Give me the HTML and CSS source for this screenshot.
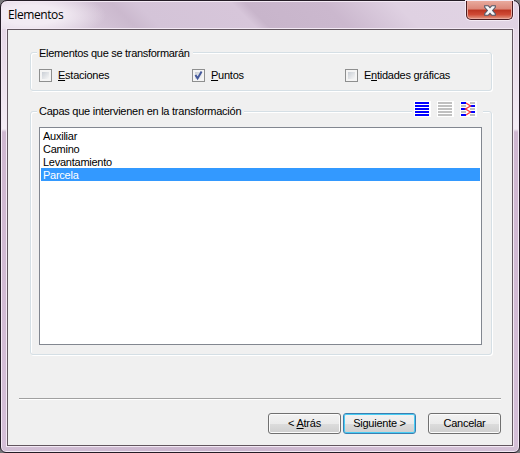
FILE: index.html
```html
<!DOCTYPE html>
<html lang="es">
<head>
<meta charset="utf-8">
<title>Elementos</title>
<link rel="stylesheet" href="styles.css">
</head>
<body>
<div class="window">
  <header class="titlebar">
    <h1 class="title">Elementos</h1>
    <button class="close" aria-label="Cerrar">
      <svg width="12" height="11" viewBox="0 0 12 11"><path d="M.7.7H4.2L6 2.7 7.8.7H11.3V2.4L8.6 5.5 11.3 8.6V10.3H7.8L6 8.3 4.2 10.3H.7V8.6L3.4 5.5.7 2.4Z" fill="#f6f6f8" stroke="#535666" stroke-width="1.1"/></svg>
    </button>
  </header>
  <main class="client">
    <section class="group options">
      <h2 class="legend">Elementos que se transformarán</h2>
      <div class="checks">
        <label class="check"><span class="box"></span><span><u>E</u>staciones</span></label>
        <label class="check"><span class="box"><svg width="11" height="11" viewBox="0 0 11 11"><path d="M2.4 5 4.6 8.4 8.6 1.6" fill="none" stroke="#45599b" stroke-width="2"/></svg></span><span><u>P</u>untos</span></label>
        <label class="check"><span class="box"></span><span>E<u>n</u>tidades gráficas</span></label>
      </div>
    </section>
    <section class="group layers">
      <h2 class="legend">Capas que intervienen en la transformación</h2>
      <div class="tools">
        <svg width="17" height="16" viewBox="0 0 17 16" shape-rendering="crispEdges"><path fill="#fff" d="M0 0h17v16H0z"/><path fill="#00f" d="M1 1h14v2H1zm0 3h14v2H1zm0 3h14v2H1zm0 3h14v2H1zm0 3h14v2H1z"/></svg>
        <svg width="17" height="16" viewBox="0 0 17 16" shape-rendering="crispEdges"><path fill="#fff" d="M0 0h17v16H0z"/><path fill="#c0c0c0" d="M1 1h14v2H1zm0 3h14v2H1zm0 3h14v2H1zm0 3h14v2H1zm0 3h14v2H1z"/></svg>
        <svg width="17" height="16" viewBox="0 0 17 16" shape-rendering="crispEdges"><path fill="#fff" d="M0 0h17v16H0z"/><path fill="#00f" d="M1 1h5v2H1zM10 4h5v2h-5zM1 7h5v2H1zM10 10h5v2h-5zM1 13h5v2H1z"/><path fill="#c0c0c0" d="M10 1h5v2h-5zM1 4h5v2H1zM10 7h5v2h-5zM1 10h5v2H1zM10 13h5v2h-5z"/><path shape-rendering="auto" fill="none" stroke="#ff3c3c" stroke-width="1.3" d="M6 2 10.5 5 5.5 8 10.5 11 6 14"/></svg>
      </div>
      <ul class="list">
        <li>Auxiliar</li>
        <li>Camino</li>
        <li>Levantamiento</li>
        <li class="selected">Parcela</li>
      </ul>
    </section>
    <footer class="actions">
      <button class="button">&lt; <u>A</u>trás</button>
      <button class="button primary">Siguiente &gt;</button>
      <button class="button cancel">Cancelar</button>
    </footer>
  </main>
</div>
</body>
</html>
```
FILE: styles.css
```css
* { box-sizing: border-box; }
body {
  margin: 0;
  background: #77777a;
  font: 11px/13px "Liberation Sans", sans-serif;
  letter-spacing: -0.25px;
  color: #000;
}
h1, h2, ul { margin: 0; padding: 0; font: inherit; }
u { text-underline-offset: 1px; text-decoration-thickness: 1px; text-decoration-skip-ink: none; }
button { font: inherit; letter-spacing: inherit; color: inherit; padding: 0; }
.window {
  width: 520px;
  height: 453px;
  padding: 0 6px 6px;
  border: 1px solid #241c26;
  border-radius: 7px 7px 6px 6px;
  box-shadow: inset 0 0 0 1px #f3e9f4;
  background:
    linear-gradient(90deg, #d3c0d6, #c9b4cc 210px, #d3bfd5 390px, #d3c0d6) 0 100% / 100% 7px no-repeat,
    linear-gradient(#e6d8e7 0, #e9dcea 30px, #f4ecf4 100px, #cfb7d0 103px, #d5bfd8 100%) 0 28px / 100% 423px no-repeat,
    radial-gradient(ellipse 75px 24px at 30px 14px, #f2ebf3 40%, transparent 100%),
    linear-gradient(45deg, #e3d6e5 0, #d8c9db 15%, #cbb9ce 25%, #d4c4d8 29.5%, #d7c6da 47%, #c8b5cb 49.5%, #cbb8ce 64%, #dfd1e2 77%, #e1d4e4 100%) 0 0 / 100% 28px no-repeat;
}
.titlebar { display: flex; justify-content: space-between; height: 28px; }
.title {
  padding: 6px 0 0 1px;
  font: 12px/16px "Open Sans", sans-serif;
  letter-spacing: -0.4px;
}
.close {
  display: flex;
  align-items: center;
  justify-content: center;
  width: 47px;
  height: 19px;
  border: 1px solid #4a1c20;
  border-top: 0;
  border-radius: 0 0 5px 5px;
  background: linear-gradient(#e8aa9e 0, #dc8678 45%, #bc3420 50%, #cf4a35 75%, #e39a84 100%);
  box-shadow: inset 0 0 0 1px #e9a79b, 0 0 0 1px #f4ebf5;
}
.client {
  display: flex;
  flex-direction: column;
  height: 417px;
  padding: 22px 19px 0 22px;
  border: 1px solid #62565f;
  box-shadow: 0 0 0 1px #f3e9f4;
  background: #f0f0f0;
}
.group {
  width: 462px;
  border: 1px solid #d5dfe5;
  border-radius: 3px;
  box-shadow: 1px 1px 0 #fff, inset 1px 1px 0 #fff;
}
.options { height: 39px; padding-left: 8px; }
.options .legend { letter-spacing: -0.3px; }
.layers {
  display: grid;
  grid-template-columns: 1fr auto;
  grid-template-rows: 16px 218px;
  height: 244px;
  margin-top: 20px;
  padding: 0 9px 0 8px;
}
.legend {
  width: max-content;
  height: 13px;
  margin: -6px 0 0 -2px;
  padding: 0 3px 0 2px;
  background: #f0f0f0;
}
.layers .legend { margin-top: -7px; }
.tools {
  display: flex;
  gap: 6px;
  width: 71px;
  height: 16px;
  margin: -11px -1px 0 0;
  padding-left: 2px;
  background: #f0f0f0;
}
.list {
  grid-column: 1 / 3;
  width: 443px;
  height: 218px;
  margin-top: -1px;
  padding: 1px;
  list-style: none;
  border: 1px solid #828790;
  background: #fff;
}
.list li { height: 13px; padding: 1px 0 0 2px; }
.list .selected { background: #3399ff; color: #fff; }
.checks { display: grid; grid-template-columns: 153px 153px auto; margin-top: 9px; }
.check { display: flex; align-items: center; gap: 6px; height: 13px; }
.box {
  width: 13px;
  height: 13px;
  border: 1px solid #8e8f8f;
  background: linear-gradient(135deg, #c9ced5, #f6f6f6) content-box, #f4f4f4;
  padding: 2px;
}
.box svg { display: block; margin: -2px; }
.actions {
  display: flex;
  justify-content: flex-end;
  width: 482px;
  margin: 43px 0 0 -11px;
  padding-top: 14px;
  border-top: 1px solid #a0a0a0;
  box-shadow: inset 0 1px 0 #fff;
}
.button {
  width: 73px;
  height: 21px;
  border: 1px solid #707070;
  border-radius: 3px;
  background: linear-gradient(#f2f2f2 0, #ebebeb 50%, #dddddd 50%, #cfcfcf 100%);
  box-shadow: inset 0 0 0 1px #fbfbfb;
}
.primary { margin-left: 2px; border-color: #3c7fb1; box-shadow: inset 0 0 0 1px #48cdf4; }
.cancel { margin-left: 12px; }
```
